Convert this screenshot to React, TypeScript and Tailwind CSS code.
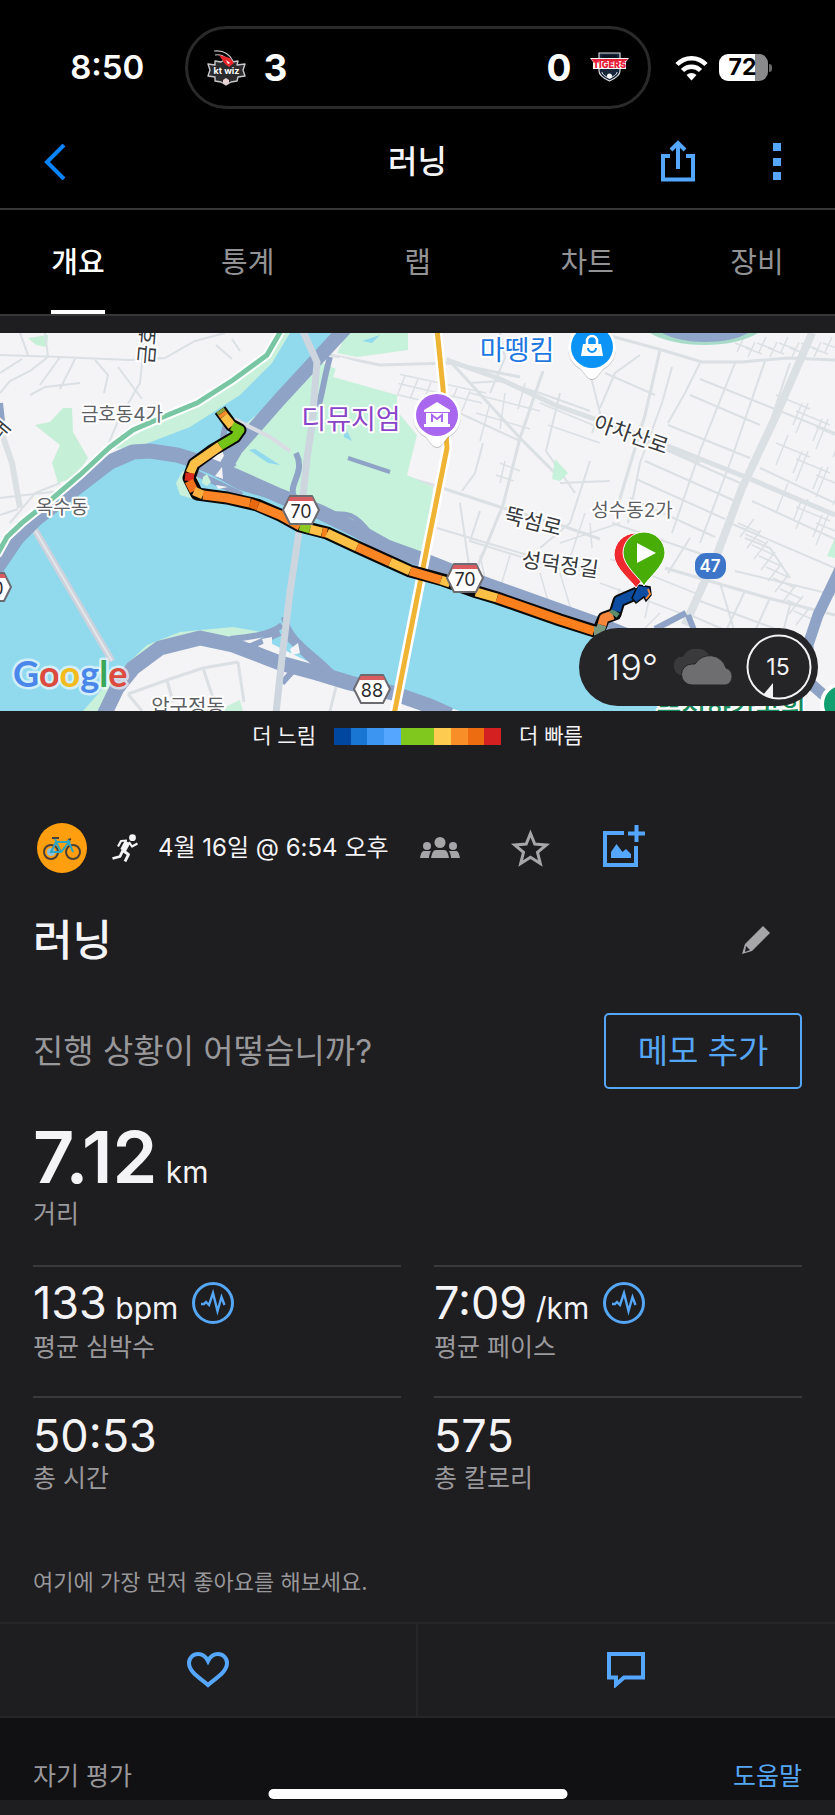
import React, { useState } from 'react';

const FONT = "font-['Inter','Noto_Sans_CJK_KR',sans-serif]";

const tabs = ['개요', '통계', '랩', '차트', '장비'];

const paceColors = [
  'bg-[#00479f]',
  'bg-[#1976d2]',
  'bg-[#3d95f2]',
  'bg-[#55a6ff]',
  'bg-[#80c81e]',
  'bg-[#80c81e]',
  'bg-[#fdcb50]',
  'bg-[#f88e28]',
  'bg-[#ee6c10]',
  'bg-[#d42020]',
];

/* ---------- Status bar ---------- */

const WizLogo = () => (
  <svg viewBox="0 0 39 36" className="w-[39px] h-9" aria-label="kt wiz">
    <path d="M8 11 14 12 19 9 25 12 31 11 30 15 38 14 36 20 38 26 31 27 30 31 24 32 19 35 14 32 8 31 8 27 1 26 3 20 1 14 8 15z" fill="#2b2b2e" stroke="#c9c9cc" strokeWidth="1.4" strokeLinejoin="round" />
    <path d="M7 1C15 0 22 3 26 11M8 5C13 4 16 5 20 9" fill="none" stroke="#c9c9cc" strokeWidth="1.2" />
    <path d="M12 5 23 8 27 13 22 17 18 14z" fill="#e8262c" />
    <path d="M19 10 23 13 21 14z" fill="#fff" />
    <path d="M16 30 19 28 22 30 22 33 19 35 16 33z" fill="#ead4d6" />
    <text x="19.500" y="24" fill="#fff" fontSize="9" fontWeight="700" textAnchor="middle">kt wiz</text>
  </svg>
);

const TigersLogo = () => (
  <svg viewBox="0 0 39 31" className="w-[39px] h-[31px]" aria-label="Tigers">
    <path d="M9 1h21v18c0 5-6 8-10.500 10C15 27 9 24 9 19z" fill="#17263a" stroke="#d5d8dc" strokeWidth="1.200" />
    <path d="M12 20c0 3 5 5 7.500 6.500C22 25 27 23 27 20" fill="none" stroke="#d5d8dc" />
    <circle cx="19.500" cy="24" r="2.500" fill="#fff" />
    <path d="M12 3h15v3H12z" fill="#0b1420" />
    <path d="M0 6h39l-3 4v7H3v-7z" fill="#fff" />
    <path d="M1 7h37l-2 2H3z" fill="#e6213a" />
    <text x="19.500" y="16" fill="#e6213a" fontSize="9" fontWeight="900" textAnchor="middle">TIGERS</text>
  </svg>
);

const WifiIcon = () => (
  <svg viewBox="0 0 33 26" className="w-[33px] h-[26px]" fill="none" stroke="#fff" strokeWidth="4.500">
    <path d="M2 9.500C10 1 23 1 31 9.500" />
    <path d="M7.500 15.500c5-5 13-5 18 0" />
    <path d="M16.500 25.500 11.500 20c3-2.700 7-2.700 10 0z" fill="#fff" stroke="none" />
  </svg>
);

const Battery = () => (
  <div className="flex items-center gap-px">
    <div className="w-[49px] h-[27px] rounded-[9px] overflow-hidden bg-linear-to-r from-white from-73% to-[#8a8a8c] to-73% flex items-center justify-center">
      <span className="text-black text-[23px] leading-none font-bold pr-px">72</span>
    </div>
    <div className="w-[3px] h-2 rounded-r-full bg-[#6a6a6c]" />
  </div>
);

const StatusBar = () => (
  <div className="grid grid-cols-[1fr_466px_1fr] items-center pt-[26px] text-white">
    <div className="text-center pl-[30px] text-[33px] leading-none font-semibold">8:50</div>
    <div className="h-[83px] rounded-full border-[3px] border-[#2a2a2b] flex items-center justify-between px-[19px]">
      <div className="flex items-center gap-[18px]">
        <WizLogo />
        <span className="text-[37px] leading-none font-bold">3</span>
      </div>
      <div className="flex items-center gap-[18px]">
        <span className="text-[37px] leading-none font-bold">0</span>
        <TigersLogo />
      </div>
    </div>
    <div className="flex items-center gap-[11px] pl-6">
      <WifiIcon />
      <Battery />
    </div>
  </div>
);

/* ---------- Map ---------- */

const highway = 'M-4 236 0 230 17 205 37 185 67 162 110 129 133 119 150 118 177 122 200 129 233 142 280 163 320 179 353 195 387 214 423 227 453 239 487 252 560 278 605 294 640 308';
const highwaySouth = 'M103 384 117 355 133 335 160 315 200 305 233 312 280 330 317 340 350 350 393 360 430 373 450 382';
const greenRoad = 'M282-4 267 22 233 47 197 70 163 84 133 97 110 114 80 142 53 165 23 189 7 204-3 222';
const yellowRoad = 'M437-4 443 55 447 115 423 235 394 382';
const route = 'M220 77 231 92 240 97 235 104 213 117 194 131 189 145 197 161 227 165 257 172 280 182 300 193 327 200 357 214 390 229 410 238 443 247 477 259 497 265 560 287 598 299 604 285 615 281 619 268 642 258';

const routeParts: [string, string][] = [
  ['M220 77 222 80', '#8aa23c'],
  ['M222 80 224 83', '#f88a28'],
  ['M224 83 232 93', '#fbc045'],
  ['M232 93 240 97 235 104 220 113', '#74c418'],
  ['M220 113 194 131 190 140', '#fbc045'],
  ['M190 140 189 148', '#da2a1c'],
  ['M189 148 194 158', '#f0701c'],
  ['M194 158 203 162', '#fbb040'],
  ['M203 162 227 165 250 170', '#fb8424'],
  ['M250 170 258 173', '#e9690f'],
  ['M258 173 280 182 300 193', '#fb8424'],
  ['M300 193 310 196', '#8cc820'],
  ['M310 196 322 199', '#fbc045'],
  ['M322 199 327 200', '#f4811c'],
  ['M327 200 357 214', '#fbc045'],
  ['M357 214 390 229', '#fb8424'],
  ['M390 229 410 238', '#fbc045'],
  ['M410 238 441 247', '#fb8424'],
  ['M441 247 450 250', '#fbc045'],
  ['M476 259 497 265', '#fbc045'],
  ['M497 265 560 287 594 298', '#fb7f1c'],
  ['M594 298 600 298 602 292', '#7a9a80'],
  ['M602 292 604 285 613 282', '#f4853a'],
  ['M613 282 616 278', '#5b8c6c'],
  ['M616 278 619 268 642 258', '#0c4da2'],
];

const parkRows = [0, 1, 2, 3, 4, 5, 6, 7, 8];

const Streets = () => (
  <g fill="none" stroke="#dbe0e4">
    {/* West side */}
    <g strokeWidth="2">
      <path d="M0 22 60 24 130 27 165 25 195 8 225 0M45 0 48 24 30 38 10 48 0 60M0 40 22 26M60 24 40 52M75 26 60 56M95 27 108 42 104 60M118 34 142 66M145 0 140 50 118 88 108 112M20 0 28 22M80 50 45 54 30 62M0 165 60 158M10 190 35 160 60 150M0 182 18 176M216 12 232 26M232 6 240 18" />
      <path d="M0 95 12 130 20 175" strokeWidth="6" />
    </g>
    {/* East side */}
    <g strokeWidth="5">
      <path d="M447 27 500 46 555 72 640 102 748 145 835 182" />
      <path d="M812 0 775 85 742 155 718 219 685 292" strokeWidth="8" />
    </g>
    <g strokeWidth="3">
      <path d="M600 0 662 17 702 29 742 29 788 25 835 27" />
      <path d="M660 17 645 82 618 172" />
      <path d="M543 38 520 105 503 172 475 240" />
      <path d="M447 25 470 50 520 105 555 140" />
      <path d="M433 152 500 174 560 192 600 206" />
      <path d="M665 235 768 265 835 282" />
      <path d="M330 22 380 32 450 30 520 44" />
      <path d="M280 102 320 118 400 143 433 152" />
    </g>
    <g strokeWidth="2">
      <path d="M437 195 527 222 590 238M470 50 500 48 540 60 590 78M483 110 475 140 462 158M500 0 505 25 490 60M560 60 546 118 575 160M590 128 570 190 540 215M455 78 520 108M560 150 610 148M590 40 600 80 592 100M640 105 700 130M460 170 470 240M480 178 470 208 560 236M600 75 615 40 640 22M700 30 685 60 668 90M700 46 835 100M690 62 760 92M668 92 750 125M655 112 740 150M645 128 735 168M636 146 725 186M630 165 715 204M612 190 710 224M605 40 655 62M672 34 662 70 640 130 628 190M735 30 700 118 672 200M765 28 730 130 700 210M790 30 770 90M690 205 668 240M730 190 835 235M760 135 835 170M752 168 835 206M745 205 770 215 790 245M700 250 690 290M720 250 735 300M745 258 725 300M770 265 745 320M790 272 775 330M700 268 800 305M690 282 790 325M735 238 835 262" />
    </g>
    <g strokeWidth="1.500">
      {parkRows.map((i) => (
        <path key={`a${i}`} d={`M${366 + i * 13} ${34 + i * 3}l-8 20`} />
      ))}
      <path d="M362 42 482 70M366 34 486 60M358 52 440 72M470 60 540 78M476 80 530 96M490 70 480 108M505 60 500 96M525 50 518 76M500 130 520 138M496 142 514 148M505 128 500 150M540 70 600 95M548 92 600 110" />
      {parkRows.map((i) => (
        <path key={`b${i}`} d={`M${776 + (i % 3) * 20} ${62 + i * 16}l34 14m-22-22l-12 30m26-14l-9 22`} />
      ))}
      {parkRows.map((i) => (
        <path key={`c${i}`} d={`M${738 + i * 7} ${190 + i * 11}l22 10m-6-14l-14 18`} />
      ))}
      {parkRows.map((i) => (
        <path key={`d${i}`} d={`M${744 + i * 11} ${4 + (i % 2) * 5}l-7 15m-2-9l16 6`} />
      ))}
      <path d="M560 210 620 190M570 225 585 180M590 190 592 215M660 280 640 300M610 226 700 262M600 250 680 280M650 262 645 285M620 255 610 285M540 240 550 275M560 240 572 280M480 222 486 250M510 222 500 256" />
    </g>
  </g>
);

type ShieldProps = { x: number; y: number; label: string };

const Shield: React.FC<ShieldProps> = ({ x, y, label }) => (
  <g transform={`translate(${x} ${y})`}>
    <path d="M-11-14h22l7 14-7 14h-22l-7-14z" fill="#fff" stroke="#6c6c70" strokeWidth="2" strokeLinejoin="round" />
    <path d="M-11-13h22l2 4h-26z" fill="#d95c60" />
    <text y="8" fontSize="18" textAnchor="middle" fill="#2c2c2e">{label}</text>
  </g>
);

const pinShape = 'M0 32c-4 0-7-5-11-10A24 24 0 1 1 11 22c-4 5-7 10-11 10z';

const RouteMap = () => (
  <svg viewBox="0 0 835 378" className="block w-full h-auto" role="img" aria-label="러닝 경로">
    <rect width="835" height="378" fill="#f4f3f5" />
    <path d="M35 92 50 89 63 75 72 75 73 99 88 125 74 145 58 150 52 130 60 112z" fill="#c6efd8" />
    <path d="M28 5 48 2 47 14 36 12z" fill="#c6efd8" />
    <Streets />

    {/* Parks and riverbank */}
    <path d="M110 116 163 86 233 49 282 0 330 0 262 62 180 112z" fill="#c9f0da" />
    <path d="M227 135 245 92 280 59 322 30 397 62 397 78 417 102 407 142 433 154 430 228 387 214 320 178 280 162z" fill="#c6f1da" />
    <path d="M347 0h61v17l-51 7-20-4z" fill="#c6f1da" />
    <path d="M340 24 400 40 397 62 333 44z" fill="#f4f3f5" />
    <path d="M835 205v20l-8-2zM555 126l13 14-8 8-8-2z" fill="#c6f1da" />

    {/* Water */}
    <path d="M0 240 37 188 110 132 150 118 200 130 280 164 387 216 560 280 605 298 660 378 460 378 393 357 317 333 250 300 180 303 140 325 95 378 0 378z" fill="#91daee" />
    <path d="M143 112 190 94 240 62 272 30 290 0 338 0 280 62 235 100 205 128 177 120z" fill="#91daee" />
    <path d="M182 139 176 150 180 162 200 168 196 130z" fill="#c9f0da" />
    <path d="M249 117 255 116 280 132 268 130zM344 92 352 108 344 104zM362 8 380 2 372 10z" fill="#91daee" />
    <path d="M83 378 112 345 147 312 180 299 233 294 267 300 250 304 180 306 145 326 115 350 106 378z" fill="#c9f0da" />
    <path d="M112 378 125 350 140 332 165 318 205 310 280 336 350 356 420 378z" fill="#f4f3f5" />
    <path d="M225 374 240 367 243 378 225 378z" fill="#c9f0da" />
    <path d="M650 0c22 14 78 18 108 0z" fill="#a8dcc8" />
    <path d="M662 0c22 12 66 12 86 0z" fill="#8fa5c9" />
    <g fill="none" stroke="#dbe0e4" strokeWidth="3">
      <path d="M128 361 167 347 203 335 238 329M167 347l6 22M203 335l10 30M238 329l6 40M128 361l14 17M336 354l-6 24" />
    </g>

    {/* Bridges */}
    <path d="M32 192 112 328" stroke="#ccd2dc" strokeWidth="7" />
    <path d="M32 192 112 328" stroke="#e4e6ea" strokeWidth="2" />

    {/* Expressways */}
    <g fill="none" stroke="#8ea3c6" strokeLinejoin="round">
      <path d={highway} strokeWidth="15" />
      <path d={highwaySouth} strokeWidth="15" />
      <path d="M354-14 280 66 236 116 222 140" strokeWidth="14" />
      <path d="M226 92c-4 12-6 22 8 42M200 132l40 22 60 18M196 140l46 22M296 120c10 20-8 30-2 44M330 24c-6 20-8 40-12 50" strokeWidth="6" />
      <path d="M320 182c30-4 36 0 50 18l24 20M340 190c18 0 24 6 30 16" strokeWidth="5" />
      <path d="M230 306c20-2 40-4 52-14M240 318l40-18M250 312l26 16M282 300c16 10 26 34 60 44M284 284c6 26 30 36 50 58M282 350l18-20" strokeWidth="6" />
      <path d="M842 232 818 282 808 312 810 350 835 372" strokeWidth="11" />
      <path d="M655 296 686 280M688 282l8 20" strokeWidth="6" />
      <path d="M348 125 390 139" strokeWidth="4" />
      <path d="M0 70 2 88" strokeWidth="6" />
    </g>
    <path d="M215 143l7-9 1 12zM216 152l12 2-10 2zM262 306l10-2v12l-8-4zM290 316l8-6 2 10-8 2z" fill="#f4f3f5" />
    <path d="M203 144l4-3 4 8-4 4-5-3z" fill="#c9f0da" />
    <path d="M302-4 317 29 312 92 307 125 300 192 290 259 282 325 276 380" fill="none" stroke="#cdd5df" strokeWidth="7" />
    <path d="M234 86 270 104 290 118" stroke="#d9dde3" strokeWidth="4" fill="none" />

    {/* Arterials */}
    <path d={greenRoad} fill="none" stroke="#fff" strokeWidth="9" />
    <path d={greenRoad} fill="none" stroke="#78c6a3" strokeWidth="5" />
    <path d={yellowRoad} fill="none" stroke="#fff" strokeWidth="10" />
    <path d={yellowRoad} fill="none" stroke="#efb434" strokeWidth="5" />

    {/* Activity track, coloured by pace */}
    <path d={route} fill="none" stroke="#0a0a0a" strokeWidth="13" strokeLinejoin="round" />
    {routeParts.map(([d, color]) => (
      <path key={d} d={d} fill="none" stroke={color} strokeWidth="9" strokeLinejoin="round" />
    ))}
    <path d="M638 252l12 2 1 8-5 6-2-4-8 6-4-5z" fill="#0c4da2" stroke="#0a0a0a" strokeWidth="1.500" />
    <path d="M648 256l2 5-4 5" fill="none" stroke="#f4853a" strokeWidth="2" />

    <Shield x={301} y={177} label="70" />
    <Shield x={465} y={245} label="70" />
    <Shield x={372} y={356} label="88" />
    <Shield x={-7} y={254} label="70" />

    {/* Place labels */}
    <g stroke="#fff" strokeWidth="4" strokeLinejoin="round" paintOrder="stroke" textAnchor="middle">
      <g fill="#5c6064" fontSize="19">
        <text x="122" y="88">금호동4가</text>
        <text x="62" y="181">옥수동</text>
        <text x="632" y="184">성수동2가</text>
        <text x="188" y="381" fontSize="20">압구정동</text>
      </g>
      <g fill="#37393c" fontSize="21">
        <text transform="translate(631 102) rotate(19)" y="7">아차산로</text>
        <text transform="translate(533 189) rotate(14)" y="7">뚝섬로</text>
        <text transform="translate(560 232) rotate(8)" y="7">성덕정길</text>
        <text transform="translate(148 12) rotate(-85)" y="7">금호</text>
        <text transform="translate(0 97) rotate(-50)" y="7">래</text>
      </g>
      <text x="351" y="96" fontSize="27" fill="#8a44c8">디뮤지엄</text>
      <text x="517" y="27" fontSize="27" fill="#1f78e0">마뗑킴</text>
      <text x="731" y="388" fontSize="27" fontWeight="500" fill="#178a5c">뚝섬한강공원</text>
    </g>

    {/* Route badge */}
    <rect x="695" y="220" width="31" height="26" rx="11" fill="#3d76c8" />
    <text x="710" y="239" fontSize="17" fontWeight="600" fill="#fff" textAnchor="middle">47</text>

    {/* Museum pin */}
    <g transform="translate(437 82)">
      <path d={pinShape} fill="#000" opacity="0.200" transform="translate(0 1)" />
      <path d={pinShape} fill="#fff" />
      <circle r="21" fill="#a966ef" />
      <path d="M0-13 13-5v2h-26v-2zM-11-2H11V9h2v3h-26V9h2z" fill="#fff" />
      <path d="M-5 7V0l5 4 5-4v7" fill="none" stroke="#a966ef" strokeWidth="2" />
    </g>

    {/* Shop pin */}
    <g transform="translate(592 14)">
      <path d={pinShape} fill="#000" opacity="0.200" transform="translate(0 1)" />
      <path d={pinShape} fill="#fff" />
      <circle r="21" fill="#0b93f6" />
      <path d="M-9-3H9l2 12h-22z" fill="#fff" />
      <path d="M-5-3v-3a5 5 0 0 1 10 0v3" fill="none" stroke="#fff" strokeWidth="2.500" />
      <path d="M-4 1a4 4 0 0 0 8 0" fill="none" stroke="#0b93f6" strokeWidth="2" />
    </g>

    <circle cx="842" cy="371" r="20" fill="#13a070" stroke="#fff" strokeWidth="4" />

    {/* Finish and start pins */}
    <path d="M636 255c-3-6-22-20-22-33a22 22 0 0 1 44 0c0 13-19 27-22 33z" fill="#f0292f" stroke="#fff" />
    <path d="M644 253c-3-7-21-20-21-33a21 21 0 0 1 42 0c0 13-18 26-21 33z" fill="#48ad07" stroke="#fff" />
    <path d="M637 210l19 10-19 10z" fill="#fff" />

    <text x="13" y="354" className="font-['Lato']" fontSize="36" fontWeight="700" stroke="#fff" strokeOpacity="0.600" strokeWidth="5" strokeLinejoin="round" paintOrder="stroke">
      <tspan fill="#4b86ea">G</tspan>
      <tspan fill="#dd4b3e">o</tspan>
      <tspan fill="#f3bb1c">o</tspan>
      <tspan fill="#4b86ea">g</tspan>
      <tspan fill="#3aa757">l</tspan>
      <tspan fill="#dd4b3e">e</tspan>
    </text>
  </svg>
);

const WeatherPill = () => (
  <div className="absolute right-[17px] bottom-[5px] w-[239px] h-[78px] rounded-full bg-[#252426] flex items-center justify-between pl-[27px] pr-[6px] text-[#f2f2f4]">
    <span className="text-[36px] leading-none font-light">19°</span>
    <svg viewBox="0 0 65 37" className="w-[65px] h-[37px]">
      <path d="M10 26a10 10 0 0 1-1-18h4A15 15 0 0 1 39 6v20z" fill="#3a393b" />
      <path d="M22 36a10.500 10.500 0 0 1 0-21h3A17 17 0 0 1 56 19a9 9 0 0 1 0 17z" fill="#6e6d70" stroke="#252426" />
    </svg>
    <svg viewBox="0 0 66 66" className="w-[66px] h-[66px]">
      <circle cx="33" cy="33" r="31.500" fill="none" stroke="#f2f2f4" strokeWidth="2" />
      <path d="M27 49v16l-10-4z" fill="#f2f2f4" />
      <text x="32" y="41" fontSize="23" fill="#f2f2f4" textAnchor="middle">15</text>
    </svg>
  </div>
);

/* ---------- Activity details ---------- */

const BikeAvatar = () => (
  <svg viewBox="0 0 50 50" className="w-[50px] h-[50px] shrink-0">
    <circle cx="25" cy="25" r="25" fill="#ff9f0f" />
    <g fill="none" stroke="#4a4038" strokeWidth="2">
      <circle cx="14" cy="29" r="7" />
      <circle cx="36" cy="29" r="7" />
      <path d="M15 15h7M31 17l3-1" />
    </g>
    <circle cx="14" cy="29" r="4" fill="#8fc0d8" />
    <path d="M14 29l5-10h13l-8 10zM19 19l5 10M18 16l2 4M31 17l5 12" fill="none" stroke="#2ba6c4" strokeWidth="2" />
  </svg>
);

const RunnerIcon = () => (
  <svg viewBox="0 0 26 28" className="w-[26px] h-7 shrink-0" fill="none" stroke="#f4f4f6" strokeLinejoin="round">
    <circle cx="20.500" cy="3.700" r="3.400" fill="#f4f4f6" stroke="none" />
    <path d="M15.500 8 11 16.500" strokeWidth="6" />
    <path d="M15 6.500 9 7 6 12.500M17 8l3 4.500 5.500-3" strokeWidth="2.200" />
    <path d="M11 16.500l5.500 4L13 27.500M11 16l-3 6.500-7.500 2" strokeWidth="2.800" />
  </svg>
);

const GroupIcon = () => (
  <svg viewBox="0 0 40 21" className="w-10 h-[21px]" fill="#a6a5a8" aria-label="공개 범위">
    <circle cx="20" cy="5.500" r="5.500" />
    <path d="M11 21c1-5 2-8 5-8h8c3 0 4 3 5 8z" />
    <circle cx="7" cy="9" r="4" />
    <circle cx="33" cy="9" r="4" />
    <path d="M0 21c1-5 2-7 4-7h7c-1 2-2 4-2 7zM40 21c-1-5-2-7-4-7h-7c1 2 2 4 2 7z" />
  </svg>
);

const PulseIcon = () => (
  <svg viewBox="0 0 42 42" className="w-[42px] h-[42px]" fill="none" stroke="#55a6f5">
    <circle cx="21" cy="21" r="19.500" strokeWidth="3" />
    <path d="M9 22h3l2-2 3 3 4-12 4.500 18 4-14 3 8" strokeWidth="2.400" strokeLinejoin="miter" />
  </svg>
);

type StatProps = { value: string; unit?: string; label: string };

const Stat: React.FC<StatProps> = ({ value, unit, label }) => (
  <div className="border-t-2 border-[#3a393c] h-[131px] pt-[15px]">
    <div className="flex items-center gap-[14px] h-[46px]">
      <p className="text-[45px] leading-[46px] text-[#f4f3f6]">
        {value}
        {unit && <span className="text-[30px]"> {unit}</span>}
      </p>
      {unit && (
        <button type="button" aria-label={`${label} 차트`} className="pb-1">
          <PulseIcon />
        </button>
      )}
    </div>
    <p className="mt-[3px] text-[25px] leading-8 text-[#9a999c]">{label}</p>
  </div>
);

export default function App() {
  const [activeTab, setActiveTab] = useState('개요');

  return (
    <div className={`${FONT} relative bg-[#1e1d20] text-[#f4f3f6] overflow-hidden`}>
      <header className="bg-black">
        <StatusBar />

        <div className="grid grid-cols-[1fr_auto_1fr] items-center h-[101px] pt-[7px] px-[44px] border-b-2 border-[#363637]">
          <button type="button" aria-label="뒤로" className="justify-self-start">
            <svg viewBox="0 0 22 36" className="w-[22px] h-9" fill="none" stroke="#0a84ff" strokeWidth="4">
              <path d="M20 1 3 18l17 17" />
            </svg>
          </button>
          <h1 className="text-[32px] leading-10 font-medium">러닝</h1>
          <div className="flex items-center justify-self-end gap-[77px] pr-[9px]">
            <button type="button" aria-label="공유" className="pb-0.5">
              <svg viewBox="0 0 34 42" className="w-[34px] h-[42px]" fill="none" stroke="#55a6ff" strokeWidth="4">
                <path d="M9 16H2v23.500h30V16h-7M17 29V4M10 10l7-7 7 7" />
              </svg>
            </button>
            <button type="button" aria-label="더 보기">
              <svg viewBox="0 0 10 38" className="w-[10px] h-[38px]" fill="#55a6ff">
                <path d="M1 0h8v8H1zM1 15h8v8H1zM1 29h8v8H1z" />
              </svg>
            </button>
          </div>
        </div>

        <nav className="flex justify-between h-[106px] px-[51px] border-b-2 border-[#363637]" role="tablist">
          {tabs.map((tab) => (
            <button
              key={tab}
              type="button"
              role="tab"
              aria-selected={tab === activeTab}
              onClick={() => setActiveTab(tab)}
              className={`w-[54px] pt-1 whitespace-nowrap text-[29px] leading-none border-b-4 ${
                tab === activeTab ? 'border-white text-white font-medium' : 'border-transparent text-[#939294]'
              }`}
            >
              {tab}
            </button>
          ))}
        </nav>
      </header>

      <div className="relative mt-[17px]">
        <RouteMap />
        <WeatherPill />
      </div>

      {/* Pace legend */}
      <div className="flex items-center justify-center gap-[18px] h-[50px] text-[21px]">
        <span>더 느림</span>
        <div className="flex w-[167px] h-[17px]">
          {paceColors.map((color, i) => (
            <span key={i} className={`flex-1 ${color}`} />
          ))}
        </div>
        <span>더 빠름</span>
      </div>

      <main className="px-[33px]">
        {/* Meta */}
        <div className="flex items-center mt-[62px] h-[50px] pl-1">
          <BikeAvatar />
          <div className="ml-[25px]">
            <RunnerIcon />
          </div>
          <p className="ml-[20px] text-[24px] whitespace-nowrap">4월 16일 @ 6:54 오후</p>
          <div className="ml-[31px] pb-px">
            <GroupIcon />
          </div>
          <button type="button" aria-label="즐겨찾기" className="ml-[50px]">
            <svg viewBox="0 0 41 38" className="w-[41px] h-[38px]" fill="none" stroke="#a6a5a8" strokeWidth="3">
              <path d="M20.500 4.500l4.300 10.600 11.500.8-8.800 7.400 2.800 11.200-9.800-6.200-9.800 6.200 2.800-11.200-8.800-7.400 11.500-.8z" />
            </svg>
          </button>
          <button type="button" aria-label="사진 추가" className="ml-[52px] pb-1">
            <svg viewBox="0 0 42 42" className="w-[42px] h-[42px]" fill="none" stroke="#55a6ff" strokeWidth="4">
              <path d="M21 8H2v32h31V21M25 8.500h17M33.500 0v17" />
              <path d="M8 33V27l5.500-8 6 8 3.500-3 5 5v4z" fill="#55a6ff" stroke="none" />
            </svg>
          </button>
        </div>

        <div className="flex items-center justify-between mt-[37px] h-[60px] pr-8">
          <h2 className="text-[43px] leading-none font-medium">러닝</h2>
          <button type="button" aria-label="이름 편집">
            <svg viewBox="0 0 28 28" className="w-7 h-7">
              <path d="M21 0l7 7-18 18L0 28l3-10z" fill="#a6a5a8" />
              <path d="M4 20l4 4-5 2z" fill="#1e1d20" />
            </svg>
          </button>
        </div>

        <div className="flex items-center justify-between mt-[43px]">
          <label htmlFor="memo" className="text-[33px] leading-none text-[#98979a]">
            진행 상황이 어떻습니까?
          </label>
          <button
            id="memo"
            type="button"
            className="w-[198px] h-[76px] rounded-[5px] border-2 border-[#55a6f5] text-[33px] leading-none text-[#55a6f5]"
          >
            메모 추가
          </button>
        </div>

        {/* Distance */}
        <div className="mt-[32px] h-[144px]">
          <p className="text-[72px] leading-[72px] font-semibold">
            7.12<span className="text-[30px] leading-none font-normal">{'  '}km</span>
          </p>
          <p className="mt-[5px] text-[25px] leading-8 text-[#9a999c]">거리</p>
        </div>

        <div className="grid grid-cols-2 gap-x-[33px]">
          <Stat value="133" unit="bpm" label="평균 심박수" />
          <Stat value="7:09" unit="/km" label="평균 페이스" />
          <Stat value="50:53" label="총 시간" />
          <Stat value="575" label="총 칼로리" />
        </div>

        <p className="mt-[39px] text-[22px] leading-8 text-[#98979a]">여기에 가장 먼저 좋아요를 해보세요.</p>
      </main>

      <div className="grid grid-cols-2 mt-[24px] h-[96px] border-y-2 border-[#262528] divide-x-2 divide-[#262528]">
        <button type="button" aria-label="좋아요" className="flex items-center justify-center">
          <svg viewBox="0 0 42 36" className="w-[42px] h-9" fill="none" stroke="#55a6ff" strokeWidth="4">
            <path d="M21 33C13 26 2 20 2 11a9 9 0 0 1 9-9c5 0 8 3 10 7 2-4 5-7 10-7a9 9 0 0 1 9 9c0 9-11 15-19 22z" />
          </svg>
        </button>
        <button type="button" aria-label="댓글" className="flex items-center justify-center">
          <svg viewBox="0 0 38 36" className="w-[38px] h-9" fill="none" stroke="#55a6ff" strokeWidth="4">
            <path d="M2 2h34v23.500H17l-8 7v-7H2z" />
          </svg>
        </button>
      </div>

      <footer className="flex items-center justify-between h-[82px] px-[33px] pt-9 bg-[#111013] text-[25px]">
        <span className="text-[#98979a]">자기 평가</span>
        <a href="#help" className="text-[#55a6f5]">도움말</a>
      </footer>
      <div className="h-[15px]" />
      <div className="absolute bottom-4 left-1/2 -translate-x-1/2 w-[299px] h-[10px] rounded-full bg-white" />
    </div>
  );
}
